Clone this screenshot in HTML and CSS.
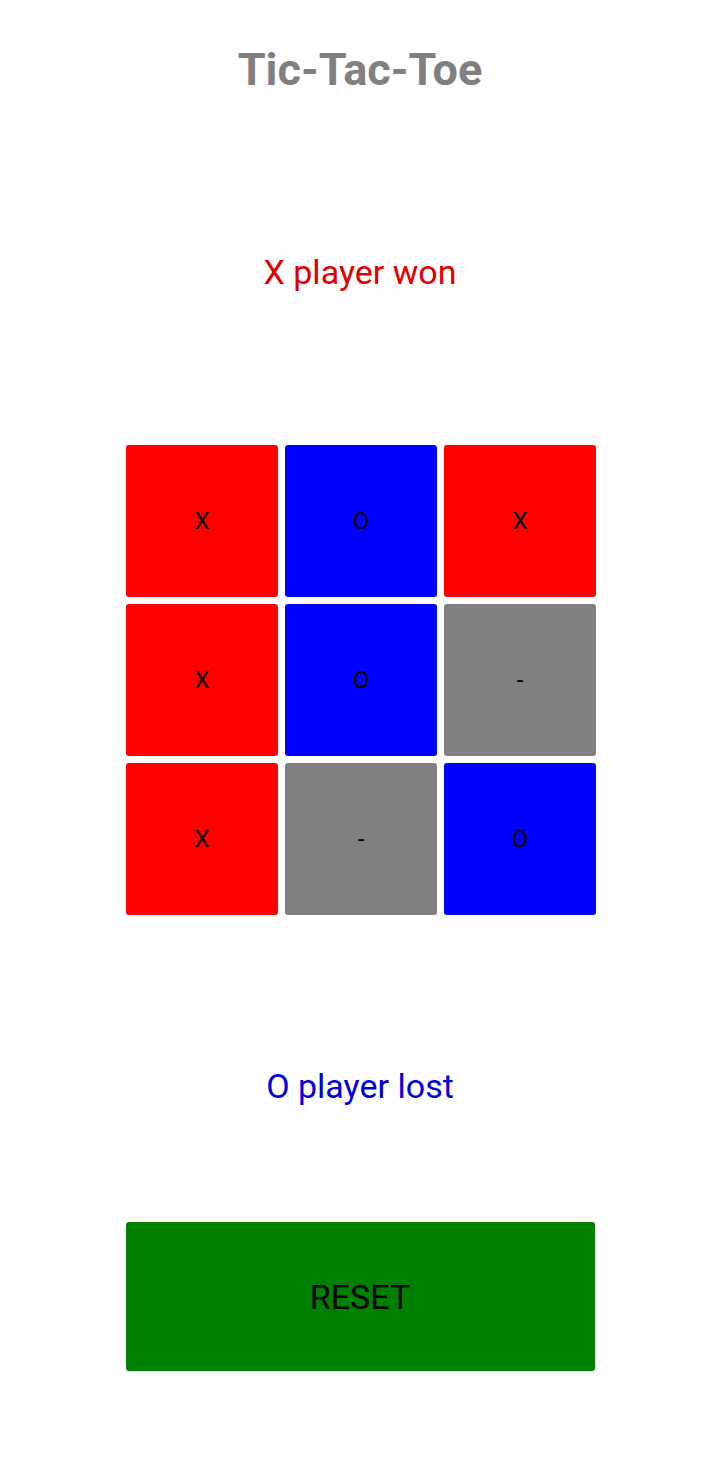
FILE: index.html
```html
<!DOCTYPE html>
<html lang="en">
<head>
    <meta charset="UTF-8">
    <meta name="viewport" content="width=device-width, initial-scale=1.0">
    <title>Tic-Tac-Toe</title>
    <link rel="stylesheet" href="styles.css">
</head>
<body>
    <div class="app">
        <h1 class="title">Tic-Tac-Toe</h1>

        <p class="status status-x">X player won</p>

        <div class="board">
            <div class="cell cell-x">X</div>
            <div class="cell cell-o">O</div>
            <div class="cell cell-x">X</div>
            <div class="cell cell-x">X</div>
            <div class="cell cell-o">O</div>
            <div class="cell cell-empty">-</div>
            <div class="cell cell-x">X</div>
            <div class="cell cell-empty">-</div>
            <div class="cell cell-o">O</div>
        </div>

        <p class="status status-o">O player lost</p>

        <button class="reset">RESET</button>
    </div>
</body>
</html>
```

FILE: styles.css
```css
body {
    margin: 0;
    font-family: Roboto, "Noto Sans", sans-serif;
    background: #fff;
}
.app {
    display: flex;
    flex-direction: column;
    align-items: center;
    padding-top: 44px;
}
.title {
    margin: 0;
    font-size: 45px;
    line-height: 52px;
    font-weight: bold;
    color: #808080;
}
.status {
    margin: 0;
    font-size: 34px;
    line-height: 40px;
}
.status-x {
    margin-top: 156px;
    color: #e00000;
}
.status-o {
    margin-top: 151px;
    color: #0000dd;
}
.board {
    margin-top: 153px;
    margin-left: 2px;
    display: grid;
    grid-template-columns: repeat(3, 152px);
    grid-auto-rows: 152px;
    gap: 7px;
}
.cell {
    display: flex;
    align-items: center;
    justify-content: center;
    border-radius: 3px;
    font-size: 24px;
    color: #000;
}
.cell-x {
    background: #ff0000;
}
.cell-o {
    background: #0000ff;
}
.cell-empty {
    background: #808080;
}
.reset {
    margin-top: 116px;
    width: 469px;
    height: 149px;
    border: none;
    border-radius: 3px;
    background: #008000;
    color: #000;
    font-family: Roboto, "Noto Sans", sans-serif;
    font-size: 34px;
    cursor: pointer;
}
```
